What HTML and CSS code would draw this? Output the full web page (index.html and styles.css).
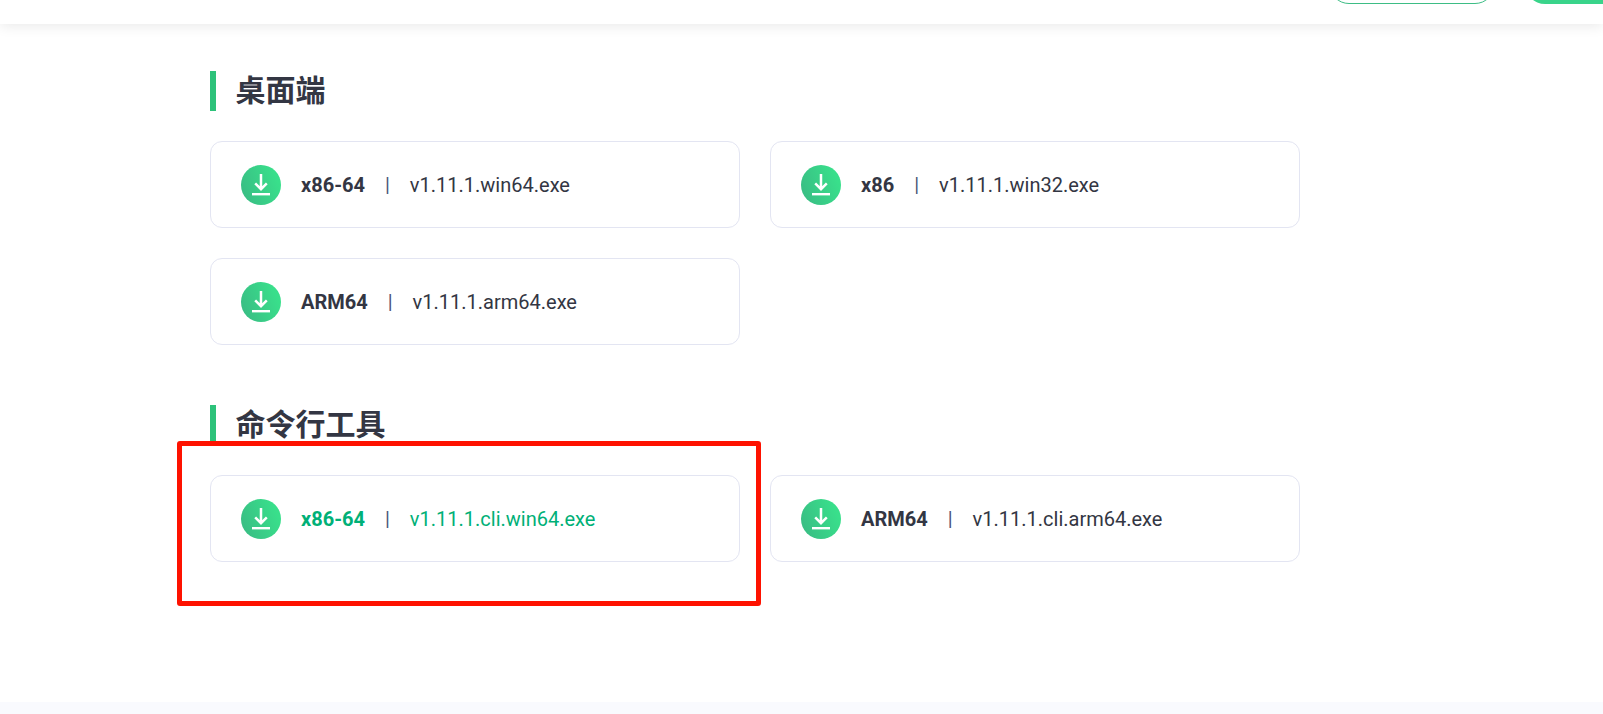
FILE: index.html
```html
<!DOCTYPE html>
<html lang="zh-CN">
<head>
<meta charset="utf-8">
<title>下载</title>
<link rel="stylesheet" href="styles.css">
</head>
<body>
<svg class="defs" width="0" height="0" aria-hidden="true">
  <defs>
    <linearGradient id="dl-grad" x1="0" y1="1" x2="1" y2="0.6">
      <stop offset="0" stop-color="#39b983"/>
      <stop offset="1" stop-color="#39df8b"/>
    </linearGradient>
    <symbol id="dl" viewBox="0 0 40 40">
      <circle cx="20" cy="20" r="20" fill="url(#dl-grad)"/>
      <path d="M20 9V24M14.2 18.4 20 24.2l5.8-5.8" fill="none" stroke="#fff" stroke-width="2.5"/>
      <path d="M11 29.2h18" fill="none" stroke="#fff" stroke-width="2.4"/>
    </symbol>
  </defs>
</svg>
<header class="topbar">
  <a class="btn btn-outline"></a>
  <a class="btn btn-solid"></a>
</header>
<main class="content">
  <section class="group">
    <h2 class="group-title">桌面端</h2>
    <div class="cards">
      <a class="card"><svg class="dl-icon"><use href="#dl"/></svg><b class="arch">x86-64</b><span class="sep">|</span><span class="file">v1.11.1.win64.exe</span></a>
      <a class="card"><svg class="dl-icon"><use href="#dl"/></svg><b class="arch">x86</b><span class="sep">|</span><span class="file">v1.11.1.win32.exe</span></a>
      <a class="card"><svg class="dl-icon"><use href="#dl"/></svg><b class="arch">ARM64</b><span class="sep">|</span><span class="file">v1.11.1.arm64.exe</span></a>
    </div>
  </section>
  <section class="group">
    <h2 class="group-title">命令行工具</h2>
    <div class="cards">
      <a class="card card-active"><svg class="dl-icon"><use href="#dl"/></svg><b class="arch">x86-64</b><span class="sep">|</span><span class="file">v1.11.1.cli.win64.exe</span></a>
      <a class="card"><svg class="dl-icon"><use href="#dl"/></svg><b class="arch">ARM64</b><span class="sep">|</span><span class="file">v1.11.1.cli.arm64.exe</span></a>
    </div>
  </section>
</main>
<footer class="footer"></footer>
<div class="annotation"></div>
</body>
</html>
```
FILE: styles.css
```css
* { box-sizing: border-box; }
html, body { margin: 0; padding: 0; }
body {
  position: relative;
  height: 714px;
  overflow: hidden;
  background: #fff;
  color: #333643;
  font-family: Roboto, "Noto Sans CJK SC", sans-serif;
}
.defs { position: absolute; }
.topbar {
  height: 24px;
  display: flex;
  align-items: flex-end;
  gap: 30px;
  padding: 0 0 20px 1329px;
  overflow: hidden;
  background: #fff;
  box-shadow: 0 2px 14px rgba(0, 0, 0, .09);
}
.btn { flex: none; height: 40px; border-radius: 20px; }
.btn-outline { width: 166px; border: 1px solid #3dbd85; }
.btn-solid { width: 166px; background: #39d48a; }
.content { width: 1090px; margin-left: 210px; padding-top: 47px; }
.group + .group { margin-top: 60px; }
.group-title {
  margin: 0 0 30px;
  height: 40px;
  border-left: 6px solid #2dc27a;
  padding-left: 19.5px;
  font: 700 30px/34px "Noto Sans CJK SC", sans-serif;
  color: #333643;
}
.cards { display: grid; grid-template-columns: 530px 530px; gap: 30px; }
.card {
  height: 87px;
  display: flex;
  align-items: center;
  padding-left: 30px;
  border: 1px solid #e3e5f2;
  border-radius: 12px;
  background: #fff;
  font-size: 20px;
}
.dl-icon { width: 40px; height: 40px; flex: none; margin: 1px 20px 0 0; }
.arch { font-weight: 700; }
.sep { margin: 0 20px; color: #4a5578; }
.card-active .arch, .card-active .file { color: #00b077; }
.footer { height: 12px; margin-top: 140px; background: #f9fafe; }
.annotation {
  position: absolute;
  left: 177px;
  top: 441px;
  width: 584px;
  height: 165px;
  border: 5px solid #fe1200;
  border-radius: 3px;
}
```
